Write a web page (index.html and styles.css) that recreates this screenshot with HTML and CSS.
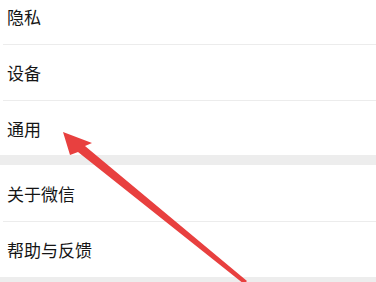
FILE: index.html
```html
<!DOCTYPE html>
<html lang="zh">
<head>
<meta charset="utf-8">
<link rel="stylesheet" href="styles.css">
</head>
<body>
<div class="page">
  <div class="group first">
    <div class="row">隐私</div>
    <div class="row">设备</div>
    <div class="row">通用</div>
  </div>
  <div class="band"></div>
  <div class="group">
    <div class="row">关于微信</div>
    <div class="row">帮助与反馈</div>
  </div>
  <div class="band"></div>
  <svg class="arrow" width="376" height="282" viewBox="0 0 376 282">
    <polygon points="63,132 92,143 85,146 247,281 244,284 78,152 70,155" fill="#e8403f"/>
  </svg>
</div>
</body>
</html>
```
FILE: styles.css
```css
html, body {
  margin: 0;
  padding: 0;
  background: #ffffff;
  overflow: hidden;
}
.page {
  position: relative;
  width: 376px;
  height: 282px;
  overflow: hidden;
  font-family: "Noto Sans CJK SC", "Noto Sans", sans-serif;
}
.group {
  display: flex;
  flex-direction: column;
  background: #ffffff;
}
.group.first {
  margin-top: -12px;
}
.row {
  height: 56px;
  display: flex;
  align-items: center;
  padding-left: 7px;
  font-size: 17px;
  color: #151515;
  box-sizing: border-box;
}
.row + .row {
  border-top: 1px solid #ececec;
  margin-left: 3px;
  padding-left: 4px;
}
.group.first .row:last-child {
  height: 55px;
}
.band {
  height: 10px;
  background: #ededed;
  flex: none;
}
.arrow {
  position: absolute;
  left: 0;
  top: 0;
}
```
